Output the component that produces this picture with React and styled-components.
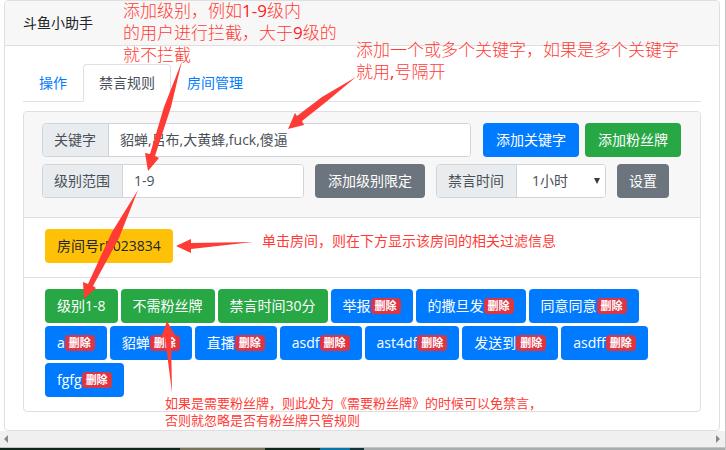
import React from "react";
import styled, { createGlobalStyle } from "styled-components";

const GlobalStyle = createGlobalStyle`
  * { box-sizing: border-box; }
  body {
    margin: 0;
    background: #fff;
    color: #212529;
    font-family: "Open Sans", "Noto Sans CJK SC", sans-serif;
    font-size: 14px;
    line-height: 22px;
    overflow: hidden;
  }
  button, input, select { font: inherit; margin: 0; }
`;

const Page = styled.div`
  position: relative;
  border-right: 1px solid #c4c4c4;
`;

const Card = styled.section`
  margin: ${(p) => (p.$outer ? "0 5px 0 4px" : "0")};
  border: 1px solid #dfdfdf;
  border-radius: 4px;
  background: #fff;
`;

const Title = styled.header`
  padding: 11px 18px;
  background: #f7f7f7;
  border-bottom: 1px solid #dfdfdf;
  border-radius: 3px 3px 0 0;
`;

const Body = styled.div`
  padding: 18px;
`;

const Tabs = styled.nav`
  display: flex;
  border-bottom: 1px solid #dee2e6;
  margin-bottom: 9px;
`;

const Tab = styled.a`
  padding: 7px 15px;
  margin-bottom: -1px;
  border: 1px solid ${(p) => (p.$active ? "#dee2e6" : "transparent")};
  border-bottom-color: ${(p) => (p.$active ? "#fff" : "transparent")};
  border-radius: 4px 4px 0 0;
  color: ${(p) => (p.$active ? "#495057" : "#007bff")};
  text-decoration: none;
`;

const Form = styled.form`
  display: flex;
  flex-direction: column;
  gap: 7px;
  padding: 11px 19px 19px 18px;
  background: #f7f7f7;
  border-bottom: 1px solid #dfdfdf;
  border-radius: 3px 3px 0 0;
`;

const FormRow = styled.div`
  display: flex;
  gap: ${(p) => p.$gap}px;
  padding-right: ${(p) => p.$end || 0}px;
`;

const Group = styled.div`
  display: flex;
  flex: ${(p) => (p.$grow ? "1 1 0" : "none")};
  min-width: 0;
  height: 34px;
  margin-right: ${(p) => p.$after || 0}px;
  border: 1px solid #ced4da;
  border-radius: 4px;
  overflow: hidden;
  background: #fff;
`;

const Addon = styled.label`
  flex: none;
  padding: 5px 12px 5px 11px;
  background: #e9ecef;
  border-right: 1px solid #ced4da;
  color: #495057;
`;

const TextInput = styled.input`
  flex: 1;
  width: 0;
  padding: 0 11px;
  border: 0;
  background: #fff;
  color: #495057;
`;

const SelectBox = styled.div`
  position: relative;
  width: 88px;
  svg {
    position: absolute;
    right: 5px;
    top: 13px;
    pointer-events: none;
  }
`;

const Select = styled.select`
  width: 100%;
  height: 100%;
  padding: 0 15px;
  border: 0;
  appearance: none;
  background: #fff;
  color: #495057;
`;

const colors = {
  blue: ["#007bff", "#fff"],
  green: ["#28a745", "#fff"],
  gray: ["#6c757d", "#fff"],
  yellow: ["#ffc107", "#212529"],
};

const Button = styled.button`
  display: inline-flex;
  align-items: center;
  flex: none;
  height: 34px;
  padding: 0 12px;
  border: 0;
  border-radius: 4px;
  white-space: nowrap;
  background: ${(p) => colors[p.$color][0]};
  color: ${(p) => colors[p.$color][1]};
`;

const FormButton = styled(Button)`
  padding: 0 13px;
`;

const Rooms = styled.div`
  padding: 11px 21px 14px;
  border-bottom: 1px solid #dfdfdf;
`;

const Tags = styled.div`
  display: flex;
  flex-wrap: wrap;
  gap: 3px;
  padding: 11px 21px 14px;
`;

const Badge = styled.span`
  padding: 0 4px;
  border-radius: 4px;
  background: #dc3545;
  font-size: 11px;
  font-weight: 700;
  line-height: 16px;
`;

const ScrollTrack = styled.div`
  display: flex;
  align-items: center;
  justify-content: space-between;
  height: 16px;
  padding: 0 5px 0 4px;
  background: #f0f0f0;
`;

const WindowEdge = styled.div`
  height: 4px;
  border-top: 1px solid #c4c4c4;
  background: linear-gradient(90deg, #10281c 0 180px, #76745a 180px 265px, #10281c 265px 320px, #0a76a8 320px 350px, #14343c 350px 364px, #a8adad 364px);
`;

const Note = styled.p`
  position: absolute;
  left: ${(p) => p.$x}px;
  top: ${(p) => p.$y}px;
  margin: 0;
  color: #ff3b36;
  font-size: ${(p) => p.$size}px;
  font-weight: ${(p) => (p.$light ? 300 : 400)};
  line-height: ${(p) => p.$line}px;
  white-space: nowrap;
  pointer-events: none;
  b { color: #fa2222; }
`;

const Arrows = styled.svg`
  position: absolute;
  left: 0;
  top: 0;
  pointer-events: none;
`;

const tags = [
  ["级别1-8"], ["不需粉丝牌"], ["禁言时间30分"],
  ["举报", true], ["的撒旦发", true], ["同意同意", true],
  ["a", true], ["貂蝉", true], ["直播", true], ["asdf", true],
  ["ast4df", true], ["发送到", true], ["asdff", true], ["fgfg", true],
];

export default function App() {
  return (
    <Page>
      <GlobalStyle />
      <Card $outer>
        <Title>斗鱼小助手</Title>
        <Body>
          <Tabs>
            <Tab href="#operate">操作</Tab>
            <Tab href="#rules" $active aria-current="page">禁言规则</Tab>
            <Tab href="#rooms">房间管理</Tab>
          </Tabs>
          <Card>
            <Form onSubmit={(e) => e.preventDefault()}>
              <FormRow $gap={6}>
                <Group $grow $after={6}>
                  <Addon htmlFor="keyword">关键字</Addon>
                  <TextInput id="keyword" defaultValue="貂蝉,吕布,大黄蜂,fuck,傻逼" />
                </Group>
                <FormButton type="button" $color="blue">添加关键字</FormButton>
                <FormButton type="button" $color="green">添加粉丝牌</FormButton>
              </FormRow>
              <FormRow $gap={11} $end={12}>
                <Group $grow>
                  <Addon htmlFor="level">级别范围</Addon>
                  <TextInput id="level" defaultValue="1-9" />
                </Group>
                <FormButton type="button" $color="gray">添加级别限定</FormButton>
                <Group>
                  <Addon htmlFor="duration">禁言时间</Addon>
                  <SelectBox>
                    <Select id="duration" defaultValue="1">
                      <option value="1">1小时</option>
                    </Select>
                    <svg width="6" height="6" viewBox="0 0 6 6"><path d="M0 0H6L3 6Z" fill="#343a40" /></svg>
                  </SelectBox>
                </Group>
                <Button type="button" $color="gray">设置</Button>
              </FormRow>
            </Form>
            <Rooms>
              <Button type="button" $color="yellow">房间号r5023834</Button>
            </Rooms>
            <Tags>
              {tags.map(([text, removable]) => (
                <Button type="button" key={text} $color={removable ? "blue" : "green"}>
                  {text}
                  {removable && <Badge>删除</Badge>}
                </Button>
              ))}
            </Tags>
          </Card>
        </Body>
      </Card>
      <ScrollTrack>
        <svg width="4" height="8" viewBox="0 0 4 8"><path d="M4 0V8L0 4Z" fill="#8a8a8a" /></svg>
        <svg width="4" height="8" viewBox="0 0 4 8"><path d="M0 0V8L4 4Z" fill="#8a8a8a" /></svg>
      </ScrollTrack>
      <WindowEdge />
      <Note $x={123} $y={0} $size={17} $line={22} $light>
        添加级别，例如<b>1-9</b>级内<br />的用户进行拦截，大于<b>9</b>级的<br />就不拦截
      </Note>
      <Note $x={356} $y={39} $size={17} $line={22} $light>
        添加一个或多个关键字，如果是多个关键字<br />就用<b>,</b>号隔开
      </Note>
      <Note $x={262} $y={232} $size={14} $line={17}>单击房间，则在下方显示该房间的相关过滤信息</Note>
      <Note $x={165} $y={395} $size={13} $line={17}>
        如果是需要粉丝牌，则此处为《需要粉丝牌》的时候可以免禁言，<br />否则就忽略是否有粉丝牌只管规则
      </Note>
      <Arrows width="726" height="450" viewBox="0 0 726 450" fill="#ff3b36" aria-hidden="true">
        <path d="M182 61L164 107L150 154L145 153L148 171L159 158L155 156L171 107Z" />
        <path d="M356 77L322 97L297 116L295 113L288 129L304 125L302 121L326 102Z" />
        <path d="M138 190L112 232L88 284L83 282L84 299L96 288L93 286L119 238Z" />
        <path d="M253 242L191 243L191 239L176 246L191 253L191 249Z" />
        <path d="M172 393L165 337L161 338L167 321L176 337L171 337Z" />
      </Arrows>
    </Page>
  );
}
